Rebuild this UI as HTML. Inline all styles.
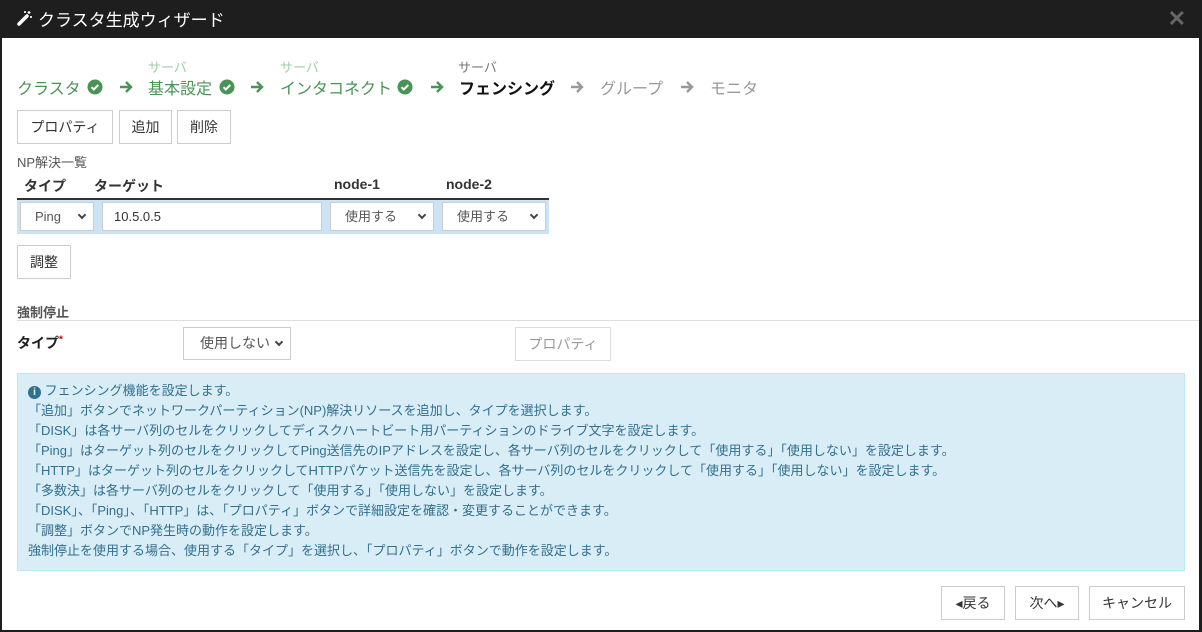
<!DOCTYPE html>
<html><head><meta charset="utf-8"><style>
*{box-sizing:border-box;margin:0;padding:0}
body{width:1202px;height:632px;background:#1e1e1e;font-family:"Liberation Sans","Noto Sans CJK JP",sans-serif;font-size:13px;color:#333;position:relative;overflow:hidden}
.hdr{position:absolute;left:0;top:0;width:1202px;height:38px;color:#fff;font-size:17px}
.hdr .t{position:absolute;left:38px;top:6px}
.x{position:absolute;right:16px;top:6px;color:#666;font-size:22px;font-weight:bold}
.main{position:absolute;left:2px;top:38px;width:1197px;height:592px;background:#fff}
.a{position:absolute;white-space:nowrap}
.g{color:#4a9356}.lg{color:#9dcfa5}
.st{position:absolute;top:37px;font-size:16px;white-space:nowrap}
.btn{position:absolute;border:1px solid #ccc;background:#fff;height:34px;line-height:32px;text-align:center;font-size:14px;color:#333}
.sel{position:absolute;border:1px solid #ccc;background:#fff;height:29px;line-height:27px;font-size:13px;color:#555}
.info{position:absolute;left:15px;top:335px;width:1168px;height:198px;background:#d9edf7;border:1px solid #bce8f1;color:#31708f;font-size:13px;line-height:20px;padding:7px 10px}
.cv{position:absolute;right:8px;top:9px;width:6px;height:6px;border-right:2px solid #444;border-bottom:2px solid #444;transform:rotate(45deg)}
svg{position:absolute}
</style></head><body>
<div class="hdr"><svg style="left:17px;top:10px" width="16" height="16" viewBox="0 0 16 16"><path d="M2 14 L10 6" stroke="#fff" stroke-width="3.5" stroke-linecap="round"/><path d="M12 1v3M10.5 2.5h3M14 6v2M13 7h2M8 1v2M7 2h2" stroke="#fff" stroke-width="1.2"/></svg><span class="t">クラスタ生成ウィザード</span><span class="x">✕</span></div>
<div class="main">
<div class="a lg" style="left:146px;top:19px;font-size:13px">サーバ</div>
<div class="a lg" style="left:278px;top:19px;font-size:13px">サーバ</div>
<div class="a" style="left:456px;top:19px;font-size:13px;color:#777">サーバ</div>
<div class="st g" style="left:15px">クラスタ</div>
<div class="st g" style="left:146px">基本設定</div>
<div class="st g" style="left:278px">インタコネクト</div>
<div class="st" style="left:457px;font-weight:bold;color:#111">フェンシング</div>
<div class="st" style="left:598px;color:#999">グループ</div>
<div class="st" style="left:708px;color:#999">モニタ</div>
<svg style="left:85px;top:41px" width="16" height="16"><circle cx="8" cy="8" r="7.5" fill="#4a9356"/><path d="M4.5 8.2l2.3 2.3 4.5-4.5" stroke="#fff" stroke-width="2" fill="none"/></svg>
<svg style="left:217px;top:41px" width="16" height="16"><circle cx="8" cy="8" r="7.5" fill="#4a9356"/><path d="M4.5 8.2l2.3 2.3 4.5-4.5" stroke="#fff" stroke-width="2" fill="none"/></svg>
<svg style="left:395px;top:41px" width="16" height="16"><circle cx="8" cy="8" r="7.5" fill="#4a9356"/><path d="M4.5 8.2l2.3 2.3 4.5-4.5" stroke="#fff" stroke-width="2" fill="none"/></svg>
<svg style="left:117px;top:42px" width="14" height="14"><path d="M1 7h11M7 2l5 5-5 5" stroke="#4a9356" stroke-width="2.4" fill="none"/></svg>
<svg style="left:248px;top:42px" width="14" height="14"><path d="M1 7h11M7 2l5 5-5 5" stroke="#4a9356" stroke-width="2.4" fill="none"/></svg>
<svg style="left:428px;top:42px" width="14" height="14"><path d="M1 7h11M7 2l5 5-5 5" stroke="#4a9356" stroke-width="2.4" fill="none"/></svg>
<svg style="left:568px;top:42px" width="14" height="14"><path d="M1 7h11M7 2l5 5-5 5" stroke="#999" stroke-width="2.4" fill="none"/></svg>
<svg style="left:678px;top:42px" width="14" height="14"><path d="M1 7h11M7 2l5 5-5 5" stroke="#999" stroke-width="2.4" fill="none"/></svg>
<div class="btn" style="left:15px;top:72px;width:96px">プロパティ</div>
<div class="btn" style="left:117px;top:72px;width:53px">追加</div>
<div class="btn" style="left:175px;top:72px;width:54px">削除</div>
<div class="a" style="left:15px;top:114px;color:#555">NP解決一覧</div>
<div class="a" style="left:22px;top:138px;font-weight:bold;font-size:14px">タイプ</div>
<div class="a" style="left:92px;top:138px;font-weight:bold;font-size:14px">ターゲット</div>
<div class="a" style="left:332px;top:138px;font-weight:bold;font-size:14px">node-1</div>
<div class="a" style="left:444px;top:138px;font-weight:bold;font-size:14px">node-2</div>
<div class="a" style="left:15px;top:160px;width:532px;height:36px;background:#cce3f5;border-top:2px solid #333"></div>
<div class="sel" style="left:18px;top:164px;width:74px;padding-left:14px">Ping<span class="cv"></span></div>
<div class="sel" style="left:100px;top:164px;width:220px;padding-left:11px;color:#333">10.5.0.5</div>
<div class="sel" style="left:328px;top:164px;width:104px;padding-left:14px">使用する<span class="cv"></span></div>
<div class="sel" style="left:440px;top:164px;width:104px;padding-left:14px">使用する<span class="cv"></span></div>
<div class="btn" style="left:15px;top:207px;width:54px">調整</div>
<div class="a" style="left:15px;top:264px;font-weight:bold;color:#555">強制停止</div>
<div class="a" style="left:15px;top:282px;width:1182px;height:1px;background:#ddd"></div>
<div class="a" style="left:15px;top:295px;font-weight:bold;font-size:14px;color:#222">タイプ<sup style="color:#c00;font-size:10px">*</sup></div>
<div class="sel" style="left:181px;top:289px;width:108px;height:33px;line-height:31px;padding-left:16px;font-size:14px">使用しない<span class="cv" style="top:11px"></span></div>
<div class="btn" style="left:513px;top:289px;width:96px;color:#999;border-color:#ddd">プロパティ</div>
<div class="info"><span style="display:inline-block;width:13px;height:13px;border-radius:50%;background:#31708f;color:#fff;font-size:10px;line-height:13px;text-align:center;font-weight:bold">i</span> フェンシング機能を設定します。<br>「追加」ボタンでネットワークパーティション(NP)解決リソースを追加し、タイプを選択します。<br>「DISK」は各サーバ列のセルをクリックしてディスクハートビート用パーティションのドライブ文字を設定します。<br>「Ping」はターゲット列のセルをクリックしてPing送信先のIPアドレスを設定し、各サーバ列のセルをクリックして「使用する」「使用しない」を設定します。<br>「HTTP」はターゲット列のセルをクリックしてHTTPパケット送信先を設定し、各サーバ列のセルをクリックして「使用する」「使用しない」を設定します。<br>「多数決」は各サーバ列のセルをクリックして「使用する」「使用しない」を設定します。<br>「DISK」、「Ping」、「HTTP」は、「プロパティ」ボタンで詳細設定を確認・変更することができます。<br>「調整」ボタンでNP発生時の動作を設定します。<br>強制停止を使用する場合、使用する「タイプ」を選択し、「プロパティ」ボタンで動作を設定します。</div>
<div class="btn" style="left:939px;top:548px;width:64px">◂戻る</div>
<div class="btn" style="left:1013px;top:548px;width:64px">次へ▸</div>
<div class="btn" style="left:1087px;top:548px;width:96px">キャンセル</div>
</div>
</body></html>
